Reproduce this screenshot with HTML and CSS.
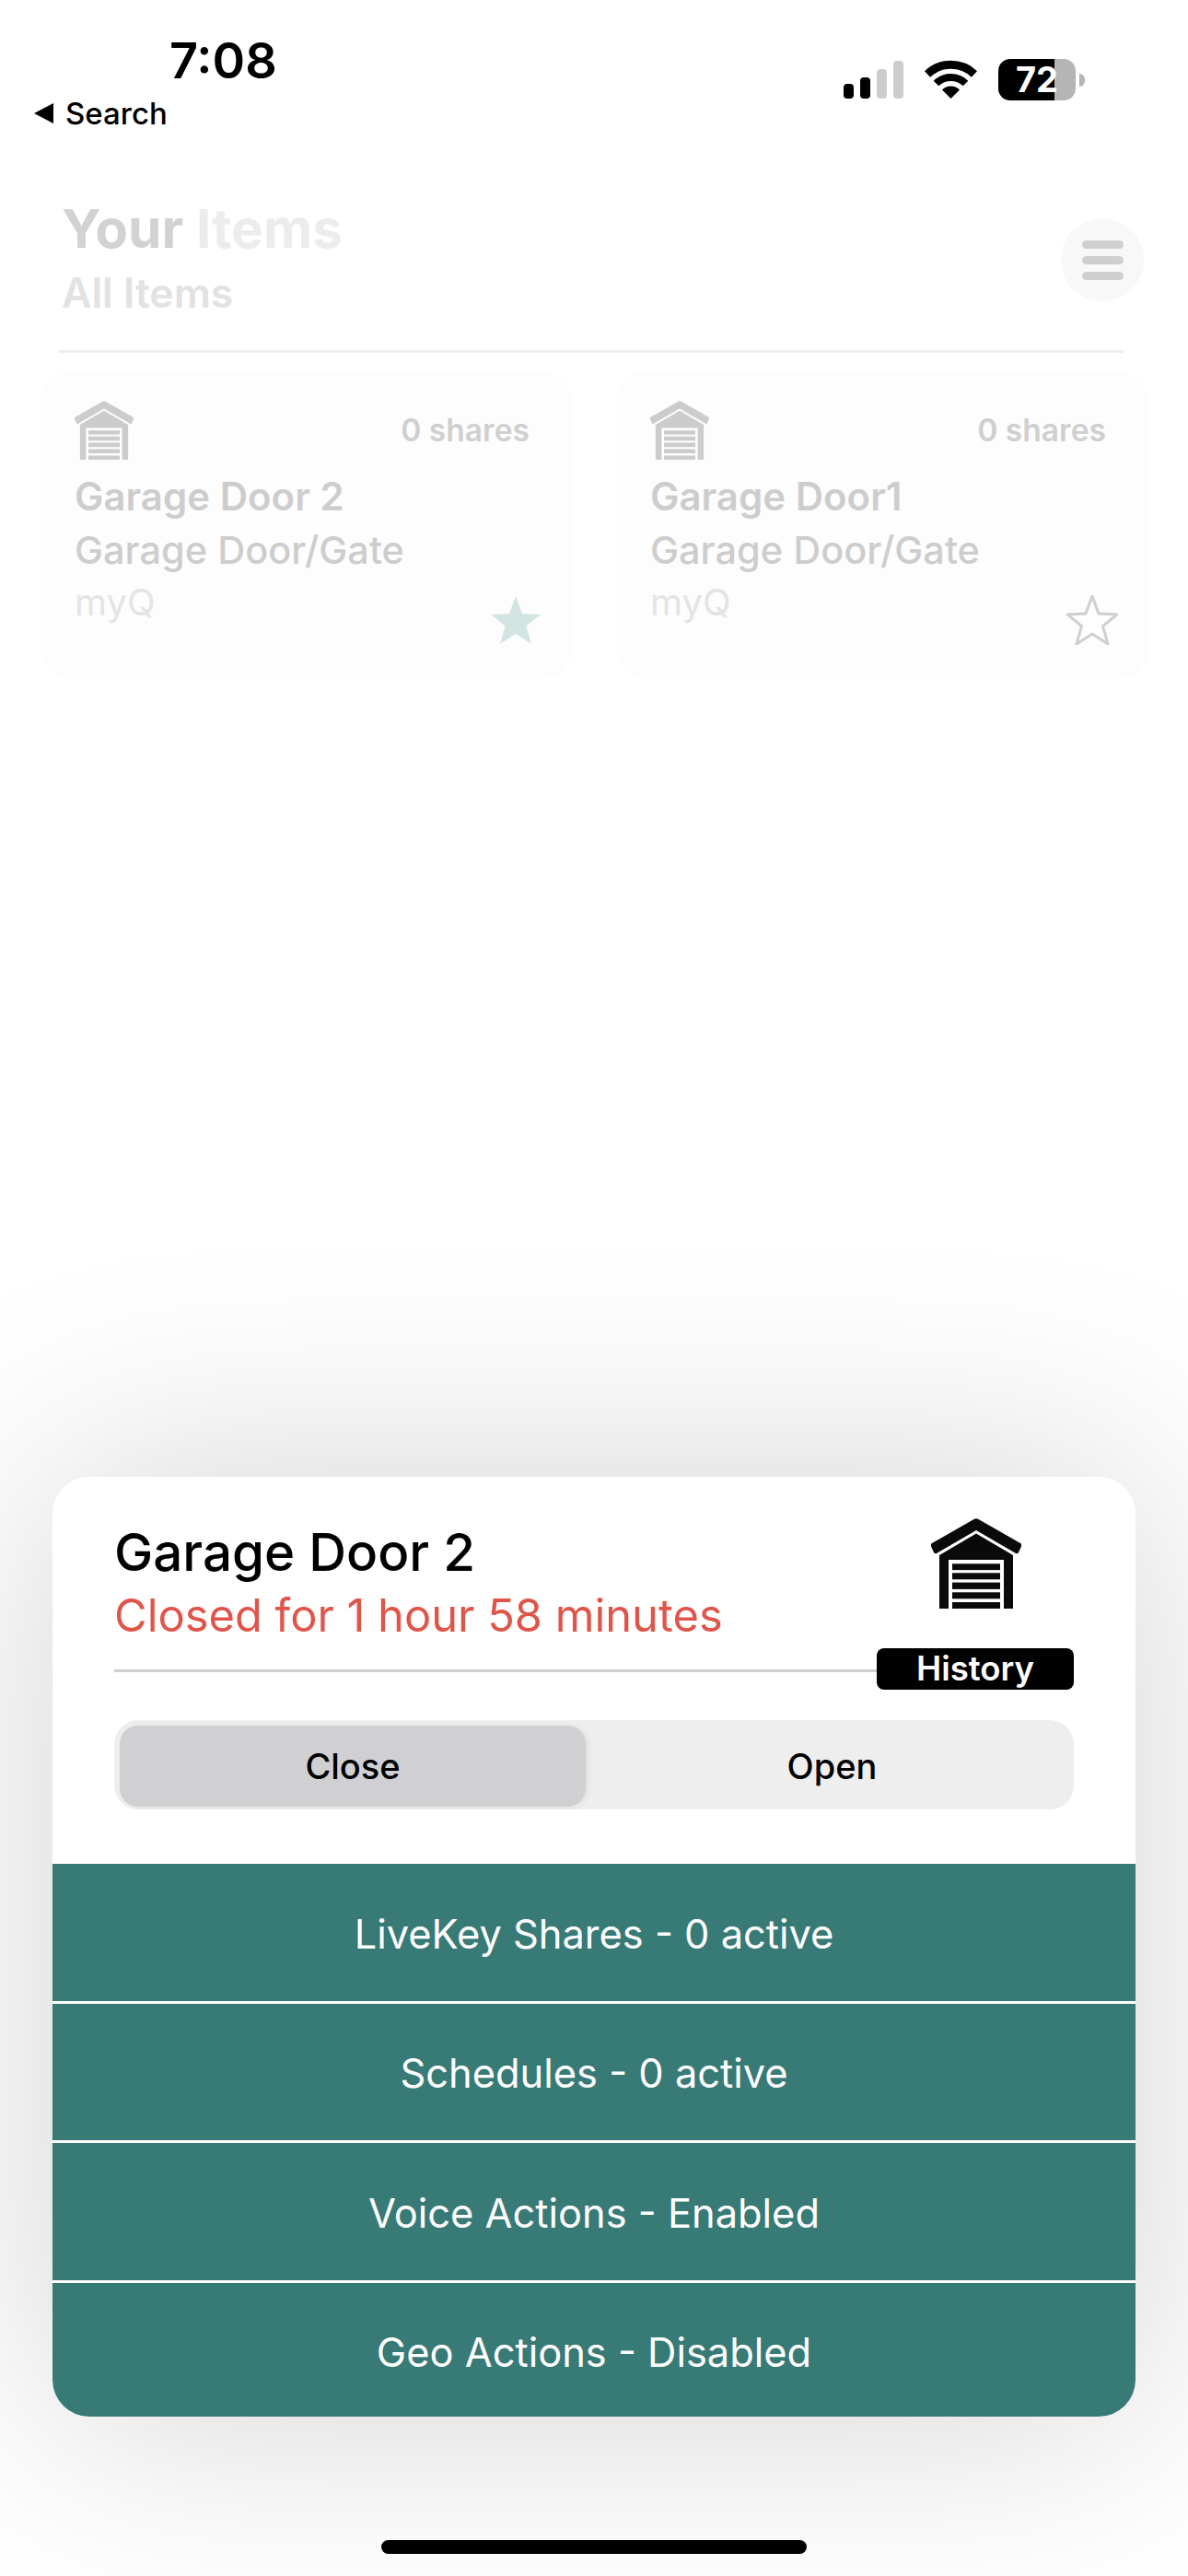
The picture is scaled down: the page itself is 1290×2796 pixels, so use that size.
FILE: index.html
```html
<!DOCTYPE html>
<html lang="en">
<head>
<meta charset="utf-8">
<title>Your Items</title>
<link rel="stylesheet" href="styles.css">
</head>
<body>
<svg class="defs" width="0" height="0" aria-hidden="true">
  <symbol id="garage" viewBox="0 0 98 98">
    <path d="M46.5 1 Q49 -.5 51.5 1 L97 27 Q99 28.5 98 30.5 L95 37 Q94 39 92 38 L49 13 L6 38 Q4 39 3 37 L0 30.5 Q-1 28.5 1 27 Z"/>
    <path fill-rule="evenodd" d="M49 16.500 L89 40 V98 H79 V45 H19 V98 H9 V40 Z"/>
    <rect x="23" y="49.300" width="52" height="6.800"/>
    <rect x="23" y="59.300" width="52" height="7"/>
    <rect x="23" y="69.600" width="52" height="7.300"/>
    <rect x="23" y="80.300" width="52" height="7"/>
    <rect x="23" y="91" width="52" height="7"/>
  </symbol>
  <symbol id="star" viewBox="0 0 56 54">
    <path d="M28 1 L35 20 L55 21 L39.500 33.500 L45 53 L28 42 L11 53 L16.500 33.500 L1 21 L21 20 Z"/>
  </symbol>
</svg>

<div class="screen">
  <header class="statusbar">
    <div class="status-left">
      <div class="time">7:08</div>
      <div class="back"><span class="back-arrow"></span>Search</div>
    </div>
    <div class="status-right">
      <div class="signal">
        <span class="bar bar-1"></span>
        <span class="bar bar-2"></span>
        <span class="bar bar-3"></span>
        <span class="bar bar-4"></span>
      </div>
      <svg class="wifi" viewBox="0 0 57 42">
        <path class="wifi-arc wifi-outer" d="M3 15.500 A37 37 0 0 1 54 15.500"/>
        <path class="wifi-arc wifi-mid" d="M12.500 25.500 A23 23 0 0 1 44.500 25.500"/>
        <path d="M19 32.500 A13.500 13.500 0 0 1 38 32.500 L28.500 42 Z"/>
      </svg>
      <div class="battery">
        <div class="battery-body"><span class="battery-level">72</span></div>
        <span class="battery-cap"></span>
      </div>
    </div>
  </header>

  <section class="page-head">
    <div>
      <h1 class="page-title"><span class="title-strong">Your</span> <span class="title-faint">Items</span></h1>
      <div class="page-sub">All Items</div>
    </div>
    <div class="menu-btn"><span></span><span></span><span></span></div>
  </section>
  <div class="head-rule"></div>

  <section class="item-grid">
    <article class="item">
      <div class="item-top">
        <svg class="item-icon"><use href="#garage"/></svg>
        <span class="shares">0 shares</span>
      </div>
      <div class="item-name">Garage Door 2</div>
      <div class="item-type">Garage Door/Gate</div>
      <div class="item-foot">
        <span class="item-brand">myQ</span>
        <svg class="star star-on"><use href="#star"/></svg>
      </div>
    </article>
    <article class="item">
      <div class="item-top">
        <svg class="item-icon"><use href="#garage"/></svg>
        <span class="shares">0 shares</span>
      </div>
      <div class="item-name">Garage Door1</div>
      <div class="item-type">Garage Door/Gate</div>
      <div class="item-foot">
        <span class="item-brand">myQ</span>
        <svg class="star star-off"><use href="#star"/></svg>
      </div>
    </article>
  </section>

  <div class="overlay">
    <section class="sheet">
      <div class="sheet-top">
        <div class="sheet-head">
          <div>
            <div class="sheet-name">Garage Door 2</div>
            <div class="sheet-status">Closed for 1 hour 58 minutes</div>
          </div>
          <svg class="sheet-icon" viewBox="0 0 98 98">
            <use href="#garage" width="98" height="98"/>
            <path fill-rule="evenodd" d="M40.500 28 H58.500 V38 H40.500 Z M44 30.500 V35.500 H55 V30.500 Z" class="sheet-window"/>
          </svg>
        </div>
        <div class="rule-row">
          <div class="rule"></div>
          <div class="history">History</div>
        </div>
        <div class="segment">
          <div class="seg seg-active">Close</div>
          <div class="seg">Open</div>
        </div>
      </div>
      <div class="action">LiveKey Shares - 0 active</div>
      <div class="action">Schedules - 0 active</div>
      <div class="action">Voice Actions - Enabled</div>
      <div class="action">Geo Actions - Disabled</div>
    </section>
    <div class="home-bar"></div>
  </div>
</div>
</body>
</html>
```
FILE: styles.css
```css
* { box-sizing: border-box; }
html, body { margin: 0; padding: 0; background: #fff; }
body { width: 1290px; height: 2796px; overflow: hidden; font-family: "Inter", "Liberation Sans", sans-serif; color: #000; }
.defs { position: absolute; }

.screen { position: relative; width: 1290px; height: 2796px; overflow: hidden; }

/* status bar */
.statusbar { display: flex; justify-content: space-between; height: 146px; }
.status-left { padding-top: 34px; }
.time { margin-left: 184px; font-size: 54px; line-height: 64px; font-weight: 600; }
.back { display: flex; align-items: center; margin: 5px 0 0 37px; font-size: 33px; line-height: 40px; font-weight: 500; }
.back-arrow { width: 0; height: 0; margin-right: 13px; border-top: 11px solid transparent; border-bottom: 11px solid transparent; border-right: 21px solid #000; }
.status-right { display: flex; align-items: flex-start; padding: 64px 112px 0 0; }
.signal { display: flex; align-items: flex-end; gap: 7px; width: 65px; height: 41px; margin-top: 2px; }
.bar { display: block; width: 11px; border-radius: 4px; }
.bar-1 { height: 16px; background: #000; }
.bar-2 { height: 23px; background: #000; }
.bar-3 { height: 32px; background: #cdcdcd; }
.bar-4 { height: 41px; background: #cdcdcd; }
.wifi { width: 57px; height: 42px; margin: 1px 23px 0 23px; fill: #000; }
.wifi-arc { fill: none; stroke: #000; }
.wifi-outer { stroke-width: 9; }
.wifi-mid { stroke-width: 8; }
.battery { display: flex; align-items: center; height: 45px; }
.battery-body { width: 84px; height: 45px; border-radius: 13px; background: linear-gradient(90deg, #000 0 61px, #b5b5b5 61px); text-align: left; overflow: hidden; }
.battery-level { display: block; margin-left: 19px; font-size: 38px; line-height: 45px; font-weight: 700; color: #fff; }
.battery-cap { width: 6px; height: 14px; margin-left: 4px; border-radius: 0 7px 7px 0; background: #b5b5b5; }

/* page head */
.page-head { display: flex; justify-content: space-between; padding: 0 48px 0 67px; height: 234px; }
.page-title { margin: 0; padding-top: 68px; font-size: 58.400px; line-height: 68px; font-weight: 700; }
.title-strong { color: #d2d2d2; }
.title-faint { color: #ececec; }
.page-sub { margin-top: 9px; font-size: 44.600px; line-height: 54px; font-weight: 600; color: #e2e2e2; }
.menu-btn { display: flex; flex-direction: column; justify-content: center; align-items: center; gap: 8px; width: 90px; height: 90px; margin-top: 91px; border-radius: 50%; background: #f8f8f8; }
.menu-btn span { display: block; width: 45px; height: 9px; border-radius: 5px; background: #cfcfcf; }
.head-rule { height: 3px; margin: 0 70px 0 64px; background: #eeeeee; }

/* cards */
.item-grid { display: grid; grid-template-columns: 579px 580px; gap: 46px; padding: 20px 43px 0; }
.item { height: 334px; padding: 30px 34px 0 38px; border-radius: 36px; background: #fdfdfd; }
.item-top { display: flex; justify-content: space-between; align-items: flex-start; height: 66px; }
.item-icon { width: 64px; height: 64px; margin-top: 2px; fill: #cccccc; }
.shares { margin: 15px 13px 0 0; font-size: 33.600px; line-height: 38px; font-weight: 600; color: #cfcfcf; }
.item-name { margin-top: 15px; font-size: 42px; line-height: 50px; font-weight: 600; color: #cdcdcd; }
.item-type { margin-top: 8px; font-size: 41.500px; line-height: 50px; font-weight: 500; color: #cdcdcd; }
.item-foot { display: flex; justify-content: space-between; align-items: flex-start; }
.item-brand { margin-top: 7px; font-size: 40px; line-height: 50px; color: #e4e4e4; }
.star { width: 56px; height: 54px; margin-top: 24px; }
.star-on { fill: #d3e5e3; }
.star-off { fill: #fff; stroke: #cfcfcf; stroke-width: 3px; overflow: visible; }

/* overlay sheet */
.overlay { position: absolute; left: 0; right: 0; top: 0; bottom: 0; display: flex; flex-direction: column; align-items: center; padding-top: 1603px; }
.sheet { position: relative; width: 1176px; height: 1020px; border-radius: 40px; overflow: hidden; background: #fff; }
.overlay::before { content: ""; position: absolute; left: 57px; top: 1603px; width: 1176px; height: 1020px; border-radius: 40px; box-shadow: 0 0 400px rgba(0, 0, 0, .18); }
.sheet-top { height: 420px; padding: 40px 67px 0; }
.sheet-head { display: flex; justify-content: space-between; align-items: flex-start; height: 146px; }
.sheet-name { margin-top: 10px; font-size: 56.500px; line-height: 64px; font-weight: 500; }
.sheet-status { margin-top: 6px; font-size: 48.800px; line-height: 62px; color: #e0554a; }
.sheet-icon { width: 98px; height: 98px; margin: 5px 57px 0 0; fill: #0a0a0a; overflow: visible; }
.rule-row { display: flex; align-items: center; height: 45px; }
.rule { flex: 1; height: 3px; margin-top: 3px; background: #cfcfcf; }
.history { width: 214px; height: 45px; border-radius: 8px; background: #000; color: #fff; text-align: center; font-size: 36.500px; line-height: 45px; font-weight: 600; }
.segment { display: flex; height: 97px; margin-top: 33px; padding: 6px 6px 3px; border-radius: 26px; background: #eeeeee; }
.seg { display: flex; align-items: center; justify-content: center; flex: 1; padding-left: 11px; font-size: 38px; font-weight: 500; }
.seg-active { flex: 0 0 506px; padding-left: 0; border-radius: 20px; background: #d0d0d3; box-shadow: 3px 0 6px rgba(0, 0, 0, .06); }
.action { display: flex; align-items: center; justify-content: center; height: 148.500px; padding-top: 3px; background: #377a76; color: #fff; font-size: 43.400px; }
.action + .action { margin-top: 3px; }
.home-bar { position: absolute; left: 414px; top: 2757px; width: 462px; height: 15px; border-radius: 8px; background: #000; }
```
